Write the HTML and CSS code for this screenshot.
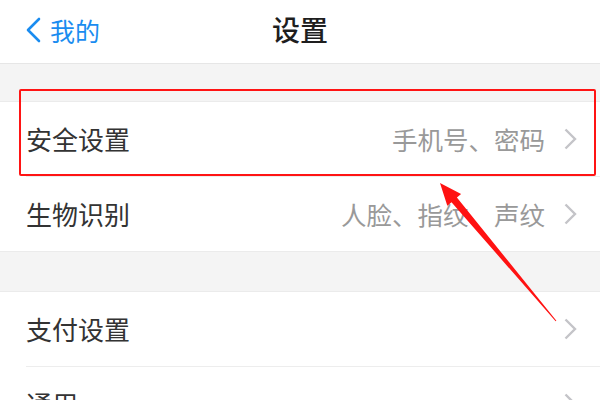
FILE: index.html
```html
<!DOCTYPE html>
<html lang="zh">
<head>
<meta charset="utf-8">
<link rel="stylesheet" href="styles.css">
</head>
<body>
<div class="page">
  <header class="nav">
    <div class="back">
      <svg class="back-icon" width="18" height="26" viewBox="0 0 18 26"><polyline points="14,2 3,13 14,24" fill="none" stroke="#1a8cf0" stroke-width="2.6" stroke-linecap="round" stroke-linejoin="round"/></svg>
      <span class="back-text">我的</span>
    </div>
    <div class="title">设置</div>
  </header>

  <div class="gap gap-first"></div>
  <section class="group">
    <div class="row">
      <div class="row-body">
        <span class="label">安全设置</span>
        <span class="value">手机号、密码</span>
        <svg class="chev" width="13" height="22" viewBox="0 0 13 22"><polyline points="1.5,1.5 11,11 1.5,20.5" fill="none" stroke="#c4c4c8" stroke-width="2.4"/></svg>
      </div>
    </div>
    <div class="row">
      <div class="row-body last">
        <span class="label">生物识别</span>
        <span class="value">人脸、指纹、声纹</span>
        <svg class="chev" width="13" height="22" viewBox="0 0 13 22"><polyline points="1.5,1.5 11,11 1.5,20.5" fill="none" stroke="#c4c4c8" stroke-width="2.4"/></svg>
      </div>
    </div>
  </section>
  <div class="gap"></div>
  <section class="group">
    <div class="row">
      <div class="row-body">
        <span class="label">支付设置</span>
        <span class="value"></span>
        <svg class="chev" width="13" height="22" viewBox="0 0 13 22"><polyline points="1.5,1.5 11,11 1.5,20.5" fill="none" stroke="#c4c4c8" stroke-width="2.4"/></svg>
      </div>
    </div>
    <div class="row">
      <div class="row-body last">
        <span class="label">通用</span>
        <span class="value"></span>
        <svg class="chev" width="13" height="22" viewBox="0 0 13 22"><polyline points="1.5,1.5 11,11 1.5,20.5" fill="none" stroke="#c4c4c8" stroke-width="2.4"/></svg>
      </div>
    </div>
  </section>

  <div class="highlight"></div>
  <svg class="arrow" width="600" height="400" viewBox="0 0 600 400">
    <polygon points="440,183 461.1,194.1 456.9,197.6 556.4,320.7 555.6,321.3 451.5,202.2 447.3,205.7" fill="#ff1212"/>
  </svg>
</div>
</body>
</html>
```

FILE: styles.css
```css
* { box-sizing: border-box; }
html, body { margin: 0; padding: 0; }
body {
  width: 600px;
  height: 400px;
  overflow: hidden;
  background: #ffffff;
  font-family: "Noto Sans CJK SC", "Noto Sans", sans-serif;
}
.page {
  position: relative;
  width: 600px;
  height: 400px;
  overflow: hidden;
}
.nav {
  position: relative;
  height: 64px;
  background: #ffffff;
  border-bottom: 1px solid #e6e6e6;
  display: flex;
  align-items: center;
  justify-content: center;
}
.back {
  position: absolute;
  left: 25px;
  top: 0;
  height: 60px;
  display: flex;
  align-items: center;
  gap: 7px;
}
.back-icon { display: block; }
.back-text {
  color: #1a8cf0;
  font-size: 25px;
  line-height: 1;
}
.title {
  color: #1e1e1e;
  font-size: 28px;
  font-weight: 500;
  line-height: 1;
  margin-top: -6px;
}
.gap {
  height: 40px;
  background: #f4f4f4;
  border-bottom: 1px solid #ebebeb;
}
.gap-first { height: 38px; }
.group { background: #ffffff; border-bottom: 1px solid #ebebeb; }
.row { padding-left: 26px; }
.row-body {
  height: 75px;
  display: flex;
  align-items: center;
  padding-right: 23px;
  border-bottom: 1px solid #ededed;
}
.row-body.last { border-bottom: none; height: 74px; }
.label {
  font-size: 26px;
  color: #333333;
  line-height: 1;
  flex: 1;
}
.value {
  font-size: 25.5px;
  color: #999999;
  line-height: 1;
  margin-right: 19px;
}
.chev { display: block; }
.highlight {
  position: absolute;
  left: 19px;
  top: 89px;
  width: 577px;
  height: 87px;
  border: 2.5px solid #ff1414;
  border-radius: 2px;
}
.arrow {
  position: absolute;
  left: 0;
  top: 0;
}
```
